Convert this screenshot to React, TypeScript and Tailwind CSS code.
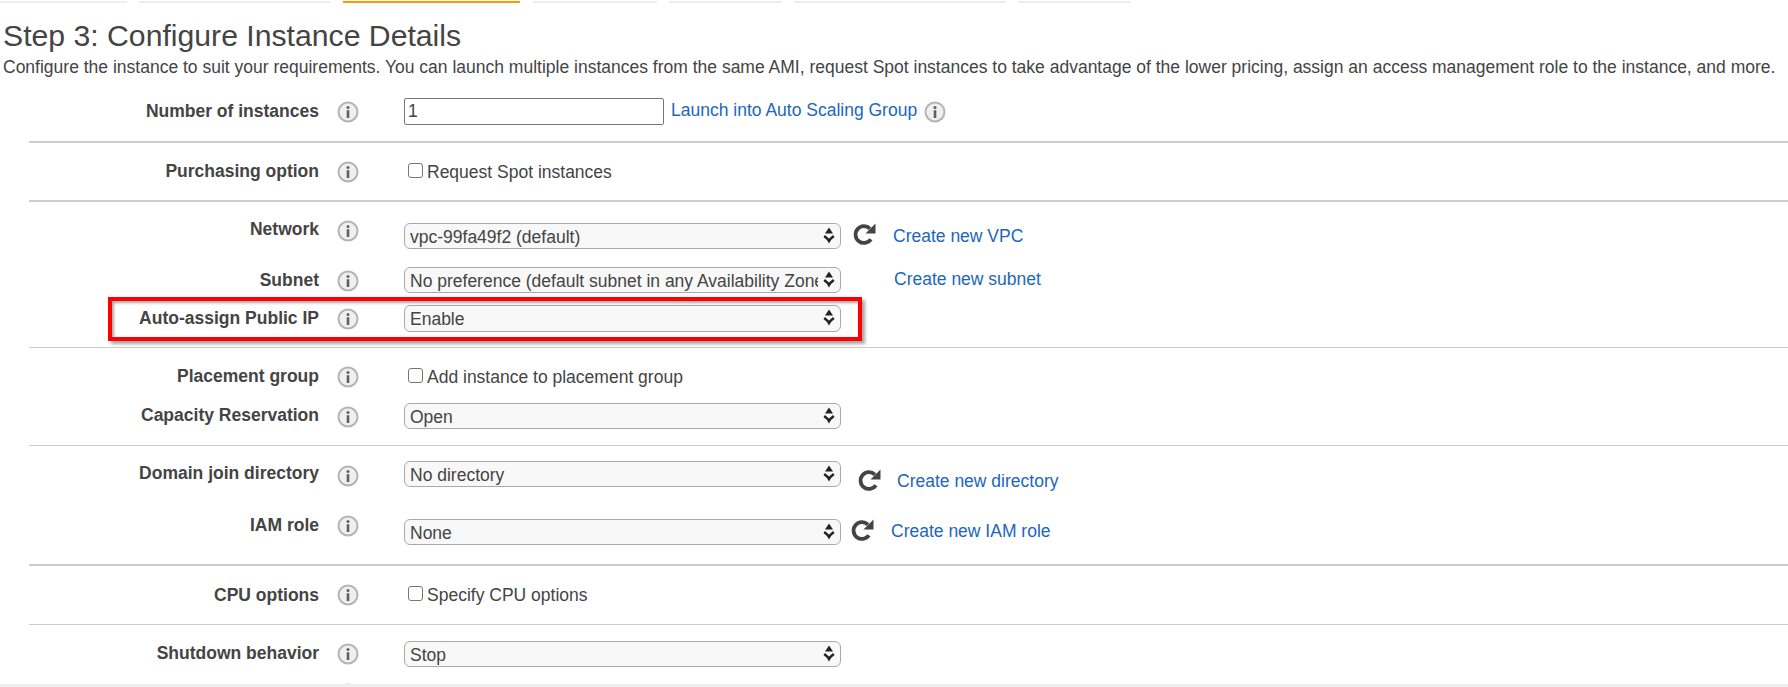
import React from "react";

function Info({ className = "" }: { className?: string }) {
  return (
    <svg width="22" height="22" viewBox="0 0 22 22" className={className}>
      <circle cx="11" cy="11" r="9.5" fill="#efefef" stroke="#b4b4b4" strokeWidth="2" />
      <circle cx="11" cy="6.6" r="1.5" fill="#5f5f5f" />
      <rect x="9.7" y="9.2" width="2.6" height="7.8" fill="#5f5f5f" />
    </svg>
  );
}

function Arrows() {
  return (
    <svg width="12" height="17" viewBox="0 0 12 17" className="absolute right-[6px] top-[4px] pointer-events-none">
      <path d="M6 0.5 L10 6.5 L2 6.5 Z" fill="#222" />
      <path d="M1.2 9 L6 13.2 L10.8 9" fill="none" stroke="#222" strokeWidth="2.4" />
      <path d="M4 13 L8 13 L6 16.5 Z" fill="#222" />
    </svg>
  );
}

function Select({ value, className = "" }: { value: string; className?: string }) {
  return (
    <div className={`relative w-[437px] shrink-0 ${className}`}>
      <select
        defaultValue={value}
        className="w-full h-full appearance-none rounded-[6px] border border-[#aaaaaa] bg-[#f8f8f8] pl-[5px] pr-[22px] text-[17.5px] text-[#444444] outline-none"
      >
        <option>{value}</option>
      </select>
      <Arrows />
    </div>
  );
}

function Label({ children, className = "" }: { children: React.ReactNode; className?: string }) {
  return (
    <div className={`w-[290px] shrink-0 text-right text-[17.5px] leading-[18px] font-bold text-[#444444] ${className}`}>
      {children}
    </div>
  );
}

function Check({ text, className = "" }: { text: string; className?: string }) {
  return (
    <label className={`flex items-start text-[17.5px] leading-[18px] text-[#444444] ${className}`}>
      <input type="checkbox" className="appearance-none w-[15px] h-[15px] mt-[2px] rounded-[3px] border border-[#767676] bg-white mr-[4px] shrink-0" />
      <span className="mt-[2px]">{text}</span>
    </label>
  );
}

function Link({ children, className = "" }: { children: React.ReactNode; className?: string }) {
  return <a className={`text-[17.5px] leading-[18px] text-[#2166bd] whitespace-nowrap ${className}`}>{children}</a>;
}

function Refresh({ className = "" }: { className?: string }) {
  return (
    <svg width="23" height="23" viewBox="0 0 23 23" className={`shrink-0 ${className}`}>
      <path d="M16.9 5.6 A8.4 8.4 0 1 0 17.9 16.3" fill="none" stroke="#444444" strokeWidth="3.8" />
      <path d="M22.5 0.5 L22.5 10.5 L12.5 10.5 Z" fill="#444444" />
    </svg>
  );
}

export default function App() {
  return (
    <div className="h-[687px] w-full overflow-hidden relative bg-white font-['Liberation_Sans',Arial,sans-serif] text-[#444444]">
      {/* wizard tabs */}
      <div className="flex pt-[1px]">
        <div className="w-[127px] h-[2px] bg-[#eeeeee]" />
        <div className="w-[191px] h-[2px] ml-[12px] bg-[#eeeeee]" />
        <div className="w-[177px] h-[2px] ml-[13px] bg-[#ff9900]" />
        <div className="w-[124px] h-[2px] ml-[13px] bg-[#eeeeee]" />
        <div className="w-[113px] h-[2px] ml-[12px] bg-[#eeeeee]" />
        <div className="w-[212px] h-[2px] ml-[12px] bg-[#eeeeee]" />
        <div className="w-[112px] h-[2px] ml-[12px] bg-[#eeeeee]" />
      </div>

      {/* heading */}
      <div className="h-[95px] pl-[3px]">
        <h1 className="pt-[16px] text-[30.2px] leading-[34px] font-normal text-[#444444]">Step 3: Configure Instance Details</h1>
        <p className="mt-[4px] text-[17.5px] leading-[20px] whitespace-nowrap">
          Configure the instance to suit your requirements. You can launch multiple instances from the same AMI, request Spot instances to take advantage of the lower pricing, assign an access management role to the instance, and more.
        </p>
      </div>

      <div className="ml-[29px]">
        <section className="h-[45px] border-b-2 border-[#cccccc]">
          <div className="flex">
            <Label className="mt-[4px]">Number of instances</Label>
            <Info className="ml-[18px] mt-[3px] shrink-0" />
            <input
              defaultValue="1"
              className="ml-[45px] w-[260px] h-[27px] border border-[#777777] rounded-[2px] pl-[3px] pb-[1px] text-[17.5px] text-[#444444] outline-none"
            />
            <Link className="ml-[7px] mt-[3px]">Launch into Auto Scaling Group</Link>
            <Info className="ml-[7px] mt-[3px] shrink-0" />
          </div>
        </section>

        <section className="h-[59px] pt-[18px] border-b-2 border-[#cccccc]">
          <div className="flex">
            <Label className="mt-[1px]">Purchasing option</Label>
            <Info className="ml-[18px] shrink-0" />
            <Check text="Request Spot instances" className="ml-[49px]" />
          </div>
        </section>

        <section className="h-[146px] pt-[18px] border-b border-[#cccccc]">
          <div className="flex h-[47px]">
            <Label>Network</Label>
            <Info className="ml-[18px] shrink-0" />
            <Select value="vpc-99fa49f2 (default)" className="ml-[45px] h-[26px] mt-[3px]" />
            <Refresh className="ml-[12px] mt-[3px]" />
            <Link className="ml-[17px] mt-[7px]">Create new VPC</Link>
          </div>
          <div className="flex h-[38px]">
            <Label className="mt-[4px]">Subnet</Label>
            <Info className="ml-[18px] mt-[3px] shrink-0" />
            <Select value="No preference (default subnet in any Availability Zone)" className="ml-[45px] h-[26px]" />
            <Link className="ml-[53px] mt-[3px]">Create new subnet</Link>
          </div>
          <div className="flex">
            <Label className="mt-[4px]">Auto-assign Public IP</Label>
            <Info className="ml-[18px] mt-[3px] shrink-0" />
            <Select value="Enable" className="ml-[45px] h-[27px]" />
          </div>
        </section>

        <section className="h-[98px] pt-[18px] border-b border-[#cccccc]">
          <div className="flex h-[37px]">
            <Label className="mt-[1px]">Placement group</Label>
            <Info className="ml-[18px] shrink-0" />
            <Check text="Add instance to placement group" className="ml-[49px]" />
          </div>
          <div className="flex">
            <Label className="mt-[3px]">Capacity Reservation</Label>
            <Info className="ml-[18px] mt-[3px] shrink-0" />
            <Select value="Open" className="ml-[45px] h-[26px]" />
          </div>
        </section>

        <section className="h-[120px] pt-[15px] border-b-2 border-[#cccccc]">
          <div className="flex h-[54px]">
            <Label className="mt-[3px]">Domain join directory</Label>
            <Info className="ml-[18px] mt-[4px] shrink-0" />
            <Select value="No directory" className="ml-[45px] h-[26px]" />
            <Refresh className="ml-[17px] mt-[8px]" />
            <Link className="ml-[16px] mt-[11px]">Create new directory</Link>
          </div>
          <div className="flex">
            <Label className="mt-[1px]">IAM role</Label>
            <Info className="ml-[18px] shrink-0" />
            <Select value="None" className="ml-[45px] h-[26px] mt-[4px]" />
            <Refresh className="ml-[10px] mt-[4px]" />
            <Link className="ml-[17px] mt-[7px]">Create new IAM role</Link>
          </div>
        </section>

        <section className="h-[59px] pt-[18px] border-b border-[#cccccc]">
          <div className="flex">
            <Label className="mt-[2px]">CPU options</Label>
            <Info className="ml-[18px] shrink-0" />
            <Check text="Specify CPU options" className="ml-[49px]" />
          </div>
        </section>

        <section className="h-[60px] pt-[14px]">
          <div className="flex">
            <Label className="mt-[5px]">Shutdown behavior</Label>
            <Info className="ml-[18px] mt-[4px] shrink-0" />
            <Select value="Stop" className="ml-[45px] h-[26px] mt-[2px]" />
          </div>
        </section>
      </div>

      {/* clipped next row and bottom bar */}
      <div className="absolute left-[337px] top-[683px]">
        <Info />
      </div>
      <div className="absolute left-0 right-0 bottom-0 h-[3px] bg-[#eeeeee]" />

      {/* red annotation */}
      <div className="absolute left-[108px] top-[297px] w-[754px] h-[44px] border-[4px] border-[#ff0000] shadow-[3px_3px_3px_rgba(0,0,0,0.35),inset_2px_2px_3px_rgba(0,0,0,0.35)]" />
    </div>
  );
}
